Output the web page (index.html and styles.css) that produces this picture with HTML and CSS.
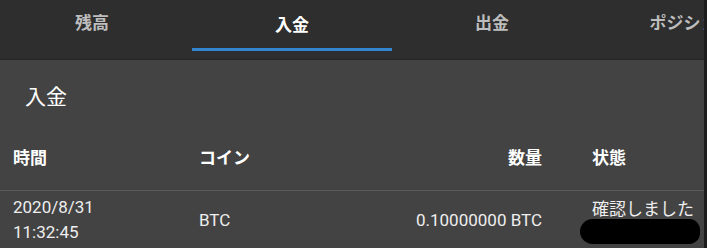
FILE: index.html
```html
<!DOCTYPE html>
<html lang="ja">
<head>
<meta charset="utf-8">
<title>入金</title>
<link rel="stylesheet" href="styles.css">
</head>
<body>
<div class="frame">
  <div class="app">
    <nav class="tabbar">
      <div class="tabs">
        <div class="tab">残高</div>
        <div class="tab active">入金</div>
        <div class="tab">出金</div>
        <div class="tab">ポジション</div>
      </div>
    </nav>
    <main class="content">
      <h1 class="title">入金</h1>
      <div class="row head">
        <div class="cell">時間</div>
        <div class="cell">コイン</div>
        <div class="cell num">数量</div>
        <div class="cell status">状態</div>
      </div>
      <div class="row data">
        <div class="cell">2020/8/31<br>11:32:45</div>
        <div class="cell">BTC</div>
        <div class="cell num">0.10000000 BTC</div>
        <div class="cell status">確認しました<span class="redact"></span></div>
      </div>
    </main>
  </div>
  <div class="edge"></div>
</div>
</body>
</html>
```

FILE: styles.css
```css
html, body {
  margin: 0;
  padding: 0;
  background: #434343;
  overflow: hidden;
}
body {
  font-family: Roboto, "Noto Sans CJK JP", sans-serif;
  color: #f2f2f2;
  width: 707px;
  height: 248px;
}
.frame {
  display: flex;
  height: 248px;
}
.app {
  flex: 1;
  min-width: 0;
  display: flex;
  flex-direction: column;
  overflow: hidden;
}
.edge {
  width: 3px;
  background: #1d1d1d;
}
.tabbar {
  background: #2e2e2e;
  height: 60px;
  box-sizing: border-box;
  border-bottom: 1px solid #262626;
  overflow: hidden;
}
.tabs {
  display: flex;
  margin-left: -8px;
}
.tab {
  flex: 0 0 200px;
  height: 48px;
  box-sizing: border-box;
  padding-bottom: 2px;
  display: flex;
  align-items: center;
  justify-content: center;
  font-size: 17px;
  font-weight: 700;
  color: #bdbdbd;
  border-bottom: 3px solid transparent;
  white-space: nowrap;
}
.tab.active {
  color: #ffffff;
  border-bottom-color: #3485d0;
  height: 51px;
}
.content {
  flex: 1;
  background: #434343;
}
.title {
  margin: 0;
  padding: 17px 25px 5px;
  font-size: 21px;
  line-height: 40px;
  font-weight: 400;
  color: #ffffff;
}
.row {
  display: grid;
  grid-template-columns: 186px 150px 243px 1fr;
  padding-left: 13px;
  align-items: center;
}
.head {
  height: 68px;
  border-bottom: 1px solid #5a5a5a;
  font-size: 17px;
  font-weight: 700;
  color: #ffffff;
}
.data {
  padding-top: 4px;
  font-size: 17px;
  line-height: 25px;
  color: #eeeeee;
}
.num {
  text-align: right;
  padding-right: 50px;
}
.status {
  white-space: nowrap;
}
.redact {
  display: block;
  width: 120px;
  height: 25px;
  margin: -3px 0 0 -12px;
  background: #000;
  border-radius: 14px 12px 12px 14px;
}
```
